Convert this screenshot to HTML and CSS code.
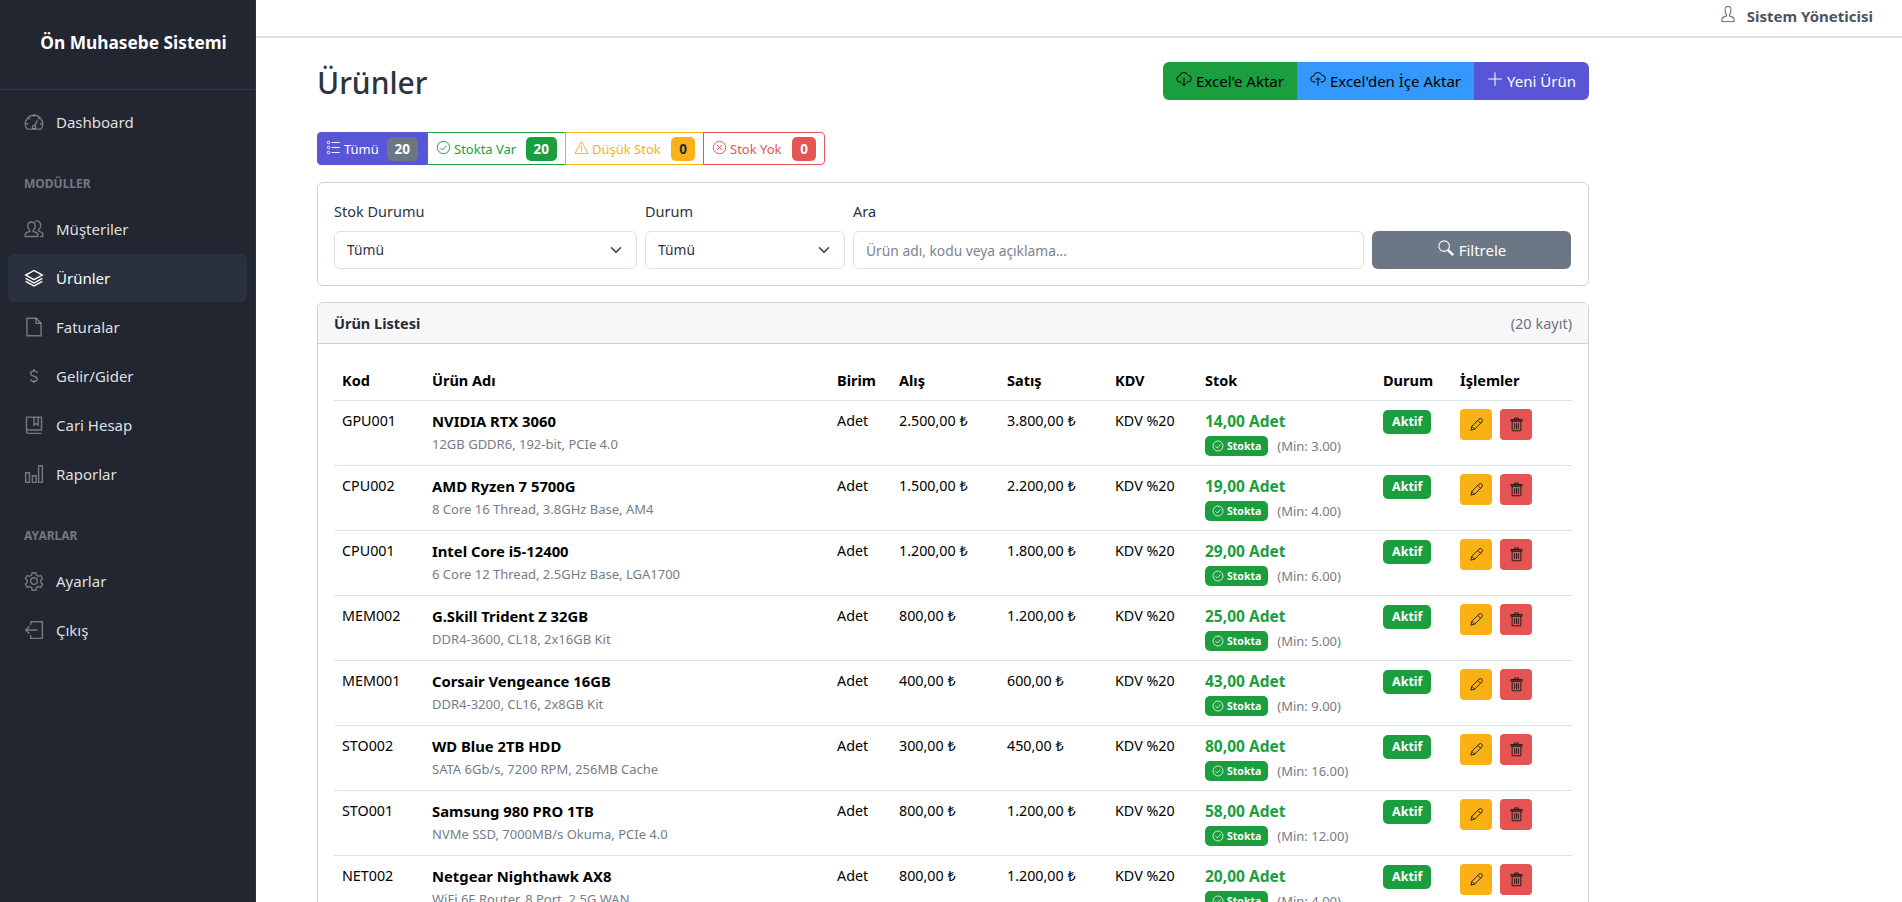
FILE: index.html
```html
<!DOCTYPE html>
<html lang="tr">
<head>
<meta charset="UTF-8">
<meta name="viewport" content="width=device-width, initial-scale=1.0">
<title>Ürünler</title>
<link rel="stylesheet" href="styles.css">
</head>
<body>
<svg class="icon-defs" width="0" height="0">
<symbol id="i-speed" viewBox="0 0 24 24"><path d="M3.5 20.5A10.5 10.5 0 1 1 20.5 20.5Z"/><path d="M12 3v2.5M5.5 7l1.6 1.6M18.5 7l-1.6 1.6M2.5 14H5M19 14h2.5"/><circle cx="12" cy="18" r="2"/><path d="M13 16.5l3-6.5"/></symbol>
<symbol id="i-people" viewBox="0 0 24 24"><path d="M9 3.5c-3 0-4.500 2.300-4.500 5 0 2.500 1 4 2.500 5V15c-3 .8-5.500 2-5.500 3.500V21h15v-2.500c0-1.500-2.500-2.700-5.500-3.500v-1.500c1.500-1 2.500-2.500 2.500-5 0-2.700-1.500-5-4.500-5Z"/><path d="M13.500 2.500c4-1 6.500 1.500 6.500 5 0 2.500-1 4.500-2.500 5.500v1.500c2.500.7 5 1.700 5 3.500V21h-3"/></symbol>
<symbol id="i-layers" viewBox="0 0 24 24"><path d="M12 3 2 8.500 12 14l10-5.500Z"/><path d="M2 12.500 12 18l10-5.500"/><path d="M2 16 12 21.500 22 16"/></symbol>
<symbol id="i-file" viewBox="0 0 24 24"><path d="M3.500 1.500h11l6 6v15h-17Z"/><path d="M14.500 1.500v6h6"/></symbol>
<symbol id="i-dollar" viewBox="0 0 24 24"><path d="M16 8.500c0-1.700-1.700-2.500-4-2.500s-4 1-4 3 1.700 2.700 4 3.300 4 1.500 4 3.400-1.700 2.800-4 2.800-4-.8-4-2.500"/><path d="M12 3.500V6M12 18v2.500"/></symbol>
<symbol id="i-book" viewBox="0 0 24 24"><path d="M3 20V2.500h18V18H5a2 2 0 0 0-2 2Zm0 0a2 2 0 0 0 2 2h16"/><path d="M12 2.500V12l2.500-2 2.500 2V2.500"/></symbol>
<symbol id="i-chart" viewBox="0 0 24 24"><path d="M2 10.500h4.500V22H2ZM10 14h4.500v8H10ZM17.500 2H22v20h-4.500Z"/></symbol>
<symbol id="i-gear" viewBox="0 0 24 24"><path d="M9.800 2h4.400l.6 3 2.400 1.400 2.900-1 2.200 3.800-2.300 2v2.600l2.300 2-2.200 3.800-2.900-1-2.400 1.400-.6 3H9.800l-.6-3-2.400-1.400-2.900 1-2.200-3.800 2.300-2v-2.600l-2.300-2 2.200-3.800 2.900 1 2.400-1.400Z"/><circle cx="12" cy="12" r="4"/></symbol>
<symbol id="i-logout" viewBox="0 0 24 24"><path d="M8 2h14v20H8v-4M8 6V2"/><path d="M16 12H2M6.500 7.500 2 12l4.500 4.500"/></symbol>
<symbol id="i-user" viewBox="0 0 24 24"><path d="M12 2c-3 0-4 2.500-4 5 0 2.500 1 4.500 2 5.500v2c-3 1-6 2-6 4V22h16v-3.500c0-2-3-3-6-4v-2c1-1 2-3 2-5.500 0-2.500-1-5-4-5Z"/></symbol>
<symbol id="i-cloud-down" viewBox="0 0 24 24"><path d="M8 16.500H6a4.500 4.500 0 0 1-.5-9A6.500 6.500 0 0 1 18 6.500a5 5 0 0 1 0 10h-2"/><path d="M12 10v12M8.500 18.500 12 22l3.500-3.500"/></symbol>
<symbol id="i-cloud-up" viewBox="0 0 24 24"><path d="M8 16.500H6a4.500 4.500 0 0 1-.5-9A6.500 6.500 0 0 1 18 6.500a5 5 0 0 1 0 10h-2"/><path d="M12 22V10M8.500 13.500 12 10l3.500 3.500"/></symbol>
<symbol id="i-plus" viewBox="0 0 24 24"><path d="M12 2v20M2 12h20"/></symbol>
<symbol id="i-search" viewBox="0 0 24 24"><circle cx="9.500" cy="9.500" r="7"/><path d="M14.500 14.500 21.500 21.500" stroke-width="3"/></symbol>
<symbol id="i-list" viewBox="0 0 24 24"><circle cx="4" cy="4" r="2"/><circle cx="4" cy="12" r="2"/><circle cx="4" cy="20" r="2"/><path d="M9 4h13M9 12h13M9 20h13"/></symbol>
<symbol id="i-check" viewBox="0 0 24 24"><circle cx="12" cy="12" r="10"/><path d="M7 12.500l3.500 3.500L17 9"/></symbol>
<symbol id="i-warn" viewBox="0 0 24 24"><path d="M12 2.500 1.500 21.500h21Z"/><path d="M12 9v6.500M12 17v2"/></symbol>
<symbol id="i-x" viewBox="0 0 24 24"><circle cx="12" cy="12" r="10"/><path d="M8 8l8 8M16 8l-8 8"/></symbol>
<symbol id="i-pencil" viewBox="0 0 24 24"><path d="M3 21l1.500-6L16 3.500a2.800 2.800 0 0 1 4.500 4.500L9 19.500Z"/><path d="M14 5.500l4.500 4.500M4.500 15l4.500 4.500"/></symbol>
<symbol id="i-trash" viewBox="0 0 24 24"><path d="M5 6.500h14V22H5ZM3 4h18v2.500H3ZM9 4V1.500h6V4"/><path d="M9 10v9M12 10v9M15 10v9"/></symbol>
</svg>
<div class="app">
<aside class="sidebar">
<div class="brand">Ön Muhasebe Sistemi</div>
<nav class="nav">
<a class="nav-link"><svg class="nav-icon"><use href="#i-speed"/></svg>Dashboard</a>
<div class="nav-title">MODÜLLER</div>
<a class="nav-link"><svg class="nav-icon"><use href="#i-people"/></svg>Müşteriler</a>
<a class="nav-link active"><svg class="nav-icon"><use href="#i-layers"/></svg>Ürünler</a>
<a class="nav-link"><svg class="nav-icon"><use href="#i-file"/></svg>Faturalar</a>
<a class="nav-link"><svg class="nav-icon"><use href="#i-dollar"/></svg>Gelir/Gider</a>
<a class="nav-link"><svg class="nav-icon"><use href="#i-book"/></svg>Cari Hesap</a>
<a class="nav-link"><svg class="nav-icon"><use href="#i-chart"/></svg>Raporlar</a>
<div class="nav-title">AYARLAR</div>
<a class="nav-link"><svg class="nav-icon"><use href="#i-gear"/></svg>Ayarlar</a>
<a class="nav-link"><svg class="nav-icon"><use href="#i-logout"/></svg>Çıkış</a>
</nav>
</aside>
<div class="wrapper">
<header class="topbar">
<svg class="icon"><use href="#i-user"/></svg>
<span class="user-name">Sistem Yöneticisi</span>
</header>
<main class="content">
<div class="page-head">
<h1>Ürünler</h1>
<div class="btn-group">
<button class="btn btn-success"><svg class="icon"><use href="#i-cloud-down"/></svg>Excel'e Aktar</button>
<button class="btn btn-info"><svg class="icon"><use href="#i-cloud-up"/></svg>Excel'den İçe Aktar</button>
<button class="btn btn-primary"><svg class="icon"><use href="#i-plus"/></svg>Yeni Ürün</button>
</div>
</div>

<div class="stock-tabs">
<a class="tab tab-all"><svg class="icon"><use href="#i-list"/></svg>Tümü<span class="count count-gray">20</span></a>
<a class="tab tab-green"><svg class="icon"><use href="#i-check"/></svg>Stokta Var<span class="count count-green">20</span></a>
<a class="tab tab-yellow"><svg class="icon"><use href="#i-warn"/></svg>Düşük Stok<span class="count count-yellow">0</span></a>
<a class="tab tab-red"><svg class="icon"><use href="#i-x"/></svg>Stok Yok<span class="count count-red">0</span></a>
</div>

<form class="card filter-card">
<div class="filter-grid">
<div>
<label class="form-label">Stok Durumu</label>
<div class="form-select">Tümü</div>
</div>
<div>
<label class="form-label">Durum</label>
<div class="form-select">Tümü</div>
</div>
<div>
<label class="form-label">Ara</label>
<input class="form-control" type="text" placeholder="Ürün adı, kodu veya açıklama...">
</div>
<div class="filter-submit">
<button class="btn btn-secondary" type="button"><svg class="icon"><use href="#i-search"/></svg>Filtrele</button>
</div>
</div>
</form>

<section class="card list-card">
<div class="card-header">
<strong>Ürün Listesi</strong>
<span class="record-count">(20 kayıt)</span>
</div>
<div class="card-body">
<table class="table">
<colgroup>
<col class="c-kod"><col class="c-name"><col class="c-unit"><col class="c-price"><col class="c-price"><col class="c-kdv"><col class="c-stock"><col class="c-status"><col class="c-actions">
</colgroup>
<thead>
<tr><th>Kod</th><th>Ürün Adı</th><th>Birim</th><th>Alış</th><th>Satış</th><th>KDV</th><th>Stok</th><th>Durum</th><th>İşlemler</th></tr>
</thead>
<tbody>
<tr>
<td>GPU001</td>
<td><strong>NVIDIA RTX 3060</strong><small>12GB GDDR6, 192-bit, PCIe 4.0</small></td>
<td>Adet</td><td>2.500,00 ₺</td><td>3.800,00 ₺</td><td>KDV %20</td>
<td><b class="stock-qty">14,00 Adet</b><div class="stock-meta"><span class="badge badge-sm"><svg class="icon"><use href="#i-check"/></svg>Stokta</span><span class="min">(Min: 3.00)</span></div></td>
<td><span class="badge">Aktif</span></td>
<td><div class="actions"><button class="icon-btn btn-warning"><svg class="icon"><use href="#i-pencil"/></svg></button><button class="icon-btn btn-danger"><svg class="icon"><use href="#i-trash"/></svg></button></div></td>
</tr>
<tr>
<td>CPU002</td>
<td><strong>AMD Ryzen 7 5700G</strong><small>8 Core 16 Thread, 3.8GHz Base, AM4</small></td>
<td>Adet</td><td>1.500,00 ₺</td><td>2.200,00 ₺</td><td>KDV %20</td>
<td><b class="stock-qty">19,00 Adet</b><div class="stock-meta"><span class="badge badge-sm"><svg class="icon"><use href="#i-check"/></svg>Stokta</span><span class="min">(Min: 4.00)</span></div></td>
<td><span class="badge">Aktif</span></td>
<td><div class="actions"><button class="icon-btn btn-warning"><svg class="icon"><use href="#i-pencil"/></svg></button><button class="icon-btn btn-danger"><svg class="icon"><use href="#i-trash"/></svg></button></div></td>
</tr>
<tr>
<td>CPU001</td>
<td><strong>Intel Core i5-12400</strong><small>6 Core 12 Thread, 2.5GHz Base, LGA1700</small></td>
<td>Adet</td><td>1.200,00 ₺</td><td>1.800,00 ₺</td><td>KDV %20</td>
<td><b class="stock-qty">29,00 Adet</b><div class="stock-meta"><span class="badge badge-sm"><svg class="icon"><use href="#i-check"/></svg>Stokta</span><span class="min">(Min: 6.00)</span></div></td>
<td><span class="badge">Aktif</span></td>
<td><div class="actions"><button class="icon-btn btn-warning"><svg class="icon"><use href="#i-pencil"/></svg></button><button class="icon-btn btn-danger"><svg class="icon"><use href="#i-trash"/></svg></button></div></td>
</tr>
<tr>
<td>MEM002</td>
<td><strong>G.Skill Trident Z 32GB</strong><small>DDR4-3600, CL18, 2x16GB Kit</small></td>
<td>Adet</td><td>800,00 ₺</td><td>1.200,00 ₺</td><td>KDV %20</td>
<td><b class="stock-qty">25,00 Adet</b><div class="stock-meta"><span class="badge badge-sm"><svg class="icon"><use href="#i-check"/></svg>Stokta</span><span class="min">(Min: 5.00)</span></div></td>
<td><span class="badge">Aktif</span></td>
<td><div class="actions"><button class="icon-btn btn-warning"><svg class="icon"><use href="#i-pencil"/></svg></button><button class="icon-btn btn-danger"><svg class="icon"><use href="#i-trash"/></svg></button></div></td>
</tr>
<tr>
<td>MEM001</td>
<td><strong>Corsair Vengeance 16GB</strong><small>DDR4-3200, CL16, 2x8GB Kit</small></td>
<td>Adet</td><td>400,00 ₺</td><td>600,00 ₺</td><td>KDV %20</td>
<td><b class="stock-qty">43,00 Adet</b><div class="stock-meta"><span class="badge badge-sm"><svg class="icon"><use href="#i-check"/></svg>Stokta</span><span class="min">(Min: 9.00)</span></div></td>
<td><span class="badge">Aktif</span></td>
<td><div class="actions"><button class="icon-btn btn-warning"><svg class="icon"><use href="#i-pencil"/></svg></button><button class="icon-btn btn-danger"><svg class="icon"><use href="#i-trash"/></svg></button></div></td>
</tr>
<tr>
<td>STO002</td>
<td><strong>WD Blue 2TB HDD</strong><small>SATA 6Gb/s, 7200 RPM, 256MB Cache</small></td>
<td>Adet</td><td>300,00 ₺</td><td>450,00 ₺</td><td>KDV %20</td>
<td><b class="stock-qty">80,00 Adet</b><div class="stock-meta"><span class="badge badge-sm"><svg class="icon"><use href="#i-check"/></svg>Stokta</span><span class="min">(Min: 16.00)</span></div></td>
<td><span class="badge">Aktif</span></td>
<td><div class="actions"><button class="icon-btn btn-warning"><svg class="icon"><use href="#i-pencil"/></svg></button><button class="icon-btn btn-danger"><svg class="icon"><use href="#i-trash"/></svg></button></div></td>
</tr>
<tr>
<td>STO001</td>
<td><strong>Samsung 980 PRO 1TB</strong><small>NVMe SSD, 7000MB/s Okuma, PCIe 4.0</small></td>
<td>Adet</td><td>800,00 ₺</td><td>1.200,00 ₺</td><td>KDV %20</td>
<td><b class="stock-qty">58,00 Adet</b><div class="stock-meta"><span class="badge badge-sm"><svg class="icon"><use href="#i-check"/></svg>Stokta</span><span class="min">(Min: 12.00)</span></div></td>
<td><span class="badge">Aktif</span></td>
<td><div class="actions"><button class="icon-btn btn-warning"><svg class="icon"><use href="#i-pencil"/></svg></button><button class="icon-btn btn-danger"><svg class="icon"><use href="#i-trash"/></svg></button></div></td>
</tr>
<tr>
<td>NET002</td>
<td><strong>Netgear Nighthawk AX8</strong><small>WiFi 6E Router, 8 Port, 2.5G WAN</small></td>
<td>Adet</td><td>800,00 ₺</td><td>1.200,00 ₺</td><td>KDV %20</td>
<td><b class="stock-qty">20,00 Adet</b><div class="stock-meta"><span class="badge badge-sm"><svg class="icon"><use href="#i-check"/></svg>Stokta</span><span class="min">(Min: 4.00)</span></div></td>
<td><span class="badge">Aktif</span></td>
<td><div class="actions"><button class="icon-btn btn-warning"><svg class="icon"><use href="#i-pencil"/></svg></button><button class="icon-btn btn-danger"><svg class="icon"><use href="#i-trash"/></svg></button></div></td>
</tr>
</tbody>
</table>
</div>
</section>
</main>
</div>
</div>
</body>
</html>
```

FILE: styles.css
```css
* {
box-sizing: border-box;
}
body {
margin: 0;
font-family: "Noto Sans", "Open Sans", sans-serif;
font-size: 15px;
line-height: 24px;
color: #252b36;
background-color: #fff;
}
.icon-defs {
position: absolute;
}
svg {
fill: none;
stroke: currentColor;
stroke-width: 1.5;
}
.app {
display: flex;
height: 100vh;
overflow: hidden;
}

/* sidebar */
.sidebar {
width: 256px;
flex-shrink: 0;
background-color: #212631;
color: rgba(255, 255, 255, 0.87);
border-right: 1px solid #2c313c;
}
.brand {
height: 90px;
display: flex;
align-items: center;
justify-content: center;
padding: 0 0 4px 12px;
font-size: 17.3px;
font-weight: 700;
color: #fff;
border-bottom: 1px solid #323a49;
}
.nav {
padding: 8px;
}
.nav-link {
display: flex;
align-items: center;
height: 48px;
margin-bottom: 1px;
padding-left: 16px;
border-radius: 6px;
}
.nav-link.active {
background-color: #2a303d;
color: #fff;
}
.nav-icon {
width: 20px;
height: 20px;
margin-right: 12px;
color: rgba(255, 255, 255, 0.38);
stroke-width: 1.7;
}
.nav-link.active .nav-icon {
color: #fff;
}
.nav-title {
height: 24px;
margin: 26px 0 9px;
padding-left: 16px;
font-size: 12px;
font-weight: 700;
color: rgba(255, 255, 255, 0.38);
}

/* topbar */
.wrapper {
flex: 1;
min-width: 0;
}
.topbar {
height: 38px;
display: flex;
align-items: center;
justify-content: flex-end;
padding: 0 29px 4px 0;
border-bottom: 2px solid #dbdcec;
}
.topbar .icon {
width: 18px;
height: 18px;
margin-right: 10px;
margin-top: -4px;
color: #6b7280;
}
.user-name {
font-size: 15px;
font-weight: 700;
color: #4d5460;
}

/* content */
.content {
width: 1333px;
padding: 24px 0 0 61px;
}
.page-head {
display: flex;
justify-content: space-between;
align-items: center;
margin-bottom: 32px;
}
h1 {
margin: 4px 0 0;
font-size: 30px;
line-height: 34px;
font-weight: 500;
color: #2d3340;
}
.btn-group {
display: flex;
}
.btn {
display: inline-flex;
align-items: center;
justify-content: center;
height: 38px;
padding: 0 12px;
border: 0;
font-family: inherit;
font-size: 15px;
color: #000;
}
.btn .icon {
width: 16px;
height: 16px;
margin-right: 4px;
margin-top: -4px;
}
.btn-group .btn:first-child {
border-radius: 6px 0 0 6px;
}
.btn-group .btn:last-child {
border-radius: 0 6px 6px 0;
}
.btn-success {
width: 134px;
background-color: #1b9e3e;
}
.btn-info {
width: 177px;
background-color: #3399ff;
}
.btn-primary {
width: 115px;
background-color: #5856d6;
color: #fff;
}
.btn-secondary {
width: 100%;
background-color: #6b7785;
color: #fff;
border-radius: 6px;
}
.btn-secondary .icon {
width: 18px;
height: 18px;
}
.btn-warning {
background-color: #f9b115;
}
.btn-danger {
background-color: #e55353;
}

/* stock tabs */
.stock-tabs {
display: flex;
height: 33px;
margin-bottom: 17px;
font-size: 13px;
}
.tab {
display: flex;
align-items: center;
padding: 0 8px;
border: 1px solid;
}
.tab .icon {
width: 15px;
height: 15px;
margin-right: 3px;
margin-top: -3px;
}
.tab-all {
width: 110px;
background-color: #5856d6;
border-color: #5856d6;
color: #fff;
border-radius: 4px 0 0 4px;
}
.tab-green {
width: 139px;
border-color: #1b9e3e;
color: #1b9e3e;
}
.tab-yellow {
width: 139px;
margin-left: -1px;
border-color: #f9b115;
color: #f9b115;
}
.tab-red {
width: 122px;
margin-left: -1px;
border-color: #e55353;
color: #e55353;
border-radius: 0 4px 4px 0;
}
.count {
margin-left: auto;
height: 24px;
padding: 0 8px;
border-radius: 5px;
font-size: 13.5px;
font-weight: 700;
line-height: 24px;
color: #fff;
}
.count-gray {
background-color: #6b7785;
}
.count-green {
background-color: #1b9e3e;
}
.count-yellow {
background-color: #f9b115;
color: #252b36;
}
.count-red {
background-color: #e55353;
}

/* cards */
.card {
border: 1px solid #d0d2d6;
border-radius: 6px;
}
.filter-card {
padding: 16px;
margin-bottom: 16px;
}
.filter-grid {
display: grid;
grid-template-columns: 303px 200px 511px 199px;
gap: 8px;
}
.form-label {
display: block;
margin-bottom: 8px;
font-size: 14.5px;
color: #2d3340;
}
.form-select,
.form-control {
display: block;
width: 100%;
height: 38px;
padding: 0 12px;
border: 1px solid #dbdfe6;
border-radius: 6px;
font-family: inherit;
font-size: 13.8px;
line-height: 36px;
color: #2d3340;
background-color: #fff;
}
.form-control::placeholder {
color: #7d838f;
opacity: 1;
}
.form-select {
background-image: url("data:image/svg+xml,%3Csvg xmlns='http://www.w3.org/2000/svg' viewBox='0 0 16 16'%3E%3Cpath fill='none' stroke='%23323a49' stroke-linecap='round' stroke-linejoin='round' stroke-width='2' d='m2 5 6 6 6-6'/%3E%3C/svg%3E");
background-repeat: no-repeat;
background-position: right 12px center;
background-size: 16px 12px;
}
.filter-submit {
display: flex;
align-items: flex-end;
}
.card-header {
display: flex;
justify-content: space-between;
align-items: center;
height: 41px;
padding: 0 16px;
background-color: #f7f7f8;
border-bottom: 1px solid #d0d2d6;
border-radius: 6px 6px 0 0;
font-size: 14.5px;
}
.record-count {
color: #6b7280;
}
.card-body {
padding: 16px;
}

/* table */
.table {
width: 100%;
table-layout: fixed;
border-collapse: collapse;
color: #000;
font-size: 14.3px;
}
.c-kod { width: 90px; }
.c-name { width: 405px; }
.c-unit { width: 62px; }
.c-price { width: 108px; }
.c-kdv { width: 90px; }
.c-stock { width: 178px; }
.c-status { width: 77px; }
.c-actions { width: 120px; }
.table th {
height: 40px;
padding: 8px;
text-align: left;
font-size: 14.5px;
font-weight: 700;
border-bottom: 1px solid #dbdfe6;
}
.table td {
height: 65px;
padding: 8px;
vertical-align: top;
border-bottom: 1px solid #dbdfe6;
white-space: nowrap;
}
.table strong {
display: block;
font-size: 14.8px;
}
.table small {
display: block;
margin-top: -1px;
font-size: 13px;
color: #767c88;
}
.stock-qty {
display: block;
font-size: 15.5px;
color: #1b9e3e;
}
.stock-meta {
display: flex;
align-items: center;
line-height: 20px;
margin-top: 3px;
}
.badge {
display: inline-block;
height: 24px;
margin-top: 1px;
padding: 0 9px;
background-color: #1b9e3e;
border-radius: 5px;
color: #fff;
font-size: 12.5px;
font-weight: 700;
line-height: 24px;
vertical-align: top;
}
.badge-sm {
display: inline-flex;
align-items: center;
height: 20px;
margin-top: 0;
padding: 0 7px;
font-size: 10.5px;
line-height: 20px;
}
.badge-sm .icon {
width: 12px;
height: 12px;
margin-right: 3px;
}
.min {
margin-left: 9px;
font-size: 13px;
color: #767c88;
}
.actions {
display: flex;
gap: 8px;
}
.icon-btn {
display: flex;
align-items: center;
justify-content: center;
width: 32px;
height: 31px;
padding: 0;
border: 0;
border-radius: 4px;
color: #1a1a1a;
}
.icon-btn .icon {
width: 15px;
height: 15px;
}
```
